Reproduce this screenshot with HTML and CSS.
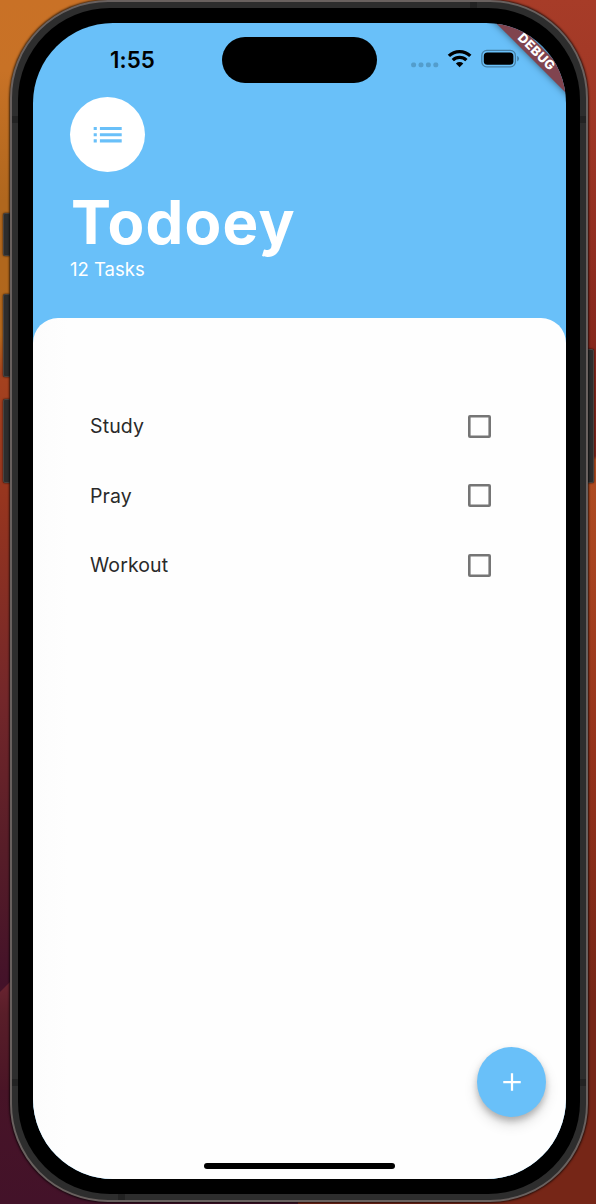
FILE: index.html
```html
<!DOCTYPE html>
<html lang="en">
<head>
<meta charset="utf-8">
<title>Todoey</title>
<link rel="stylesheet" href="styles.css">
</head>
<body>
<div class="desktop">
  <i class="wallpaper wallpaper-left"></i>
  <i class="wallpaper wallpaper-right"></i>
  <i class="wallpaper wallpaper-fold"></i>
  <i class="key key-action"></i>
  <i class="key key-up"></i>
  <i class="key key-down"></i>
  <i class="key key-power"></i>
  <div class="phone">
    <i class="band band-top"></i><i class="band band-bottom"></i>
    <i class="band band-left-top"></i><i class="band band-right-top"></i>
    <i class="band band-left-bottom"></i><i class="band band-right-bottom"></i>
    <div class="bezel">
      <main class="screen">
        <div class="status">
          <span class="time">1:55</span>
          <span class="island"></span>
          <svg class="indicators" width="110" height="20" viewBox="0 0 110 20">
            <g fill="#539dcc"><rect x="1.2" y="13.6" width="4.8" height="4.6" rx="1.6"/><rect x="8.6" y="13.6" width="4.8" height="4.6" rx="1.6"/><rect x="16" y="13.6" width="4.8" height="4.6" rx="1.6"/><rect x="23.4" y="13.6" width="4.8" height="4.6" rx="1.6"/></g>
            <g fill="none" stroke="#000" stroke-width="3.3"><path d="M38.9 6.9a15.3 15.3 0 0 1 21.4 0"/><path d="M42.8 11.1a9.8 9.8 0 0 1 13.6 0"/></g>
            <path d="M49.6 18.2l-3.7-3.8a5.4 5.4 0 0 1 7.4 0z"/>
            <rect x="71.8" y="1.4" width="33.6" height="16.4" rx="5" fill="none" stroke="#467fa5" stroke-width="1.3"/>
            <rect x="73.8" y="3.4" width="29.6" height="12.4" rx="3.6"/>
            <path d="M107.2 6.7q1.8.8 1.8 2.9t-1.8 2.9z" fill="#467fa5"/>
          </svg>
        </div>
        <header class="header">
          <div class="avatar">
            <svg width="37.4" height="37.4" viewBox="0 0 24 24" fill="#69c0f9"><path d="M3 13h2v-2H3v2zm0 4h2v-2H3v2zm0-8h2V7H3v2zm4 4h14v-2H7v2zm0 4h14v-2H7v2zM7 7v2h14V7H7z"/></svg>
          </div>
          <h1 class="title">Todoey</h1>
          <p class="count">12 Tasks</p>
        </header>
        <section class="sheet">
          <ul class="tasks">
            <li class="task"><span>Study</span><i class="check"></i></li>
            <li class="task"><span>Pray</span><i class="check"></i></li>
            <li class="task"><span>Workout</span><i class="check"></i></li>
          </ul>
        </section>
        <div class="ribbon">DEBUG</div>
        <button class="add" aria-label="Add task">
          <svg width="30" height="30" viewBox="0 0 24 24" fill="#fff"><path d="M19 12.9h-6.1V19h-1.8v-6.1H5v-1.8h6.1V5h1.8v6.1H19z"/></svg>
        </button>
        <i class="home"></i>
      </main>
    </div>
  </div>
</div>
</body>
</html>
```
FILE: styles.css
```css
* { box-sizing: border-box; }
body { margin: 0; font-family: Inter, "Liberation Sans", sans-serif; }
.desktop { position: relative; width: 596px; height: 1204px; padding: 0 8px 2px 10px; overflow: hidden; background: #652017; }
.wallpaper { position: absolute; top: 0; bottom: 0; }
.wallpaper-left { left: 0; width: 298px; background: linear-gradient(#c97126 0, #c87226 70px, #b0671e 200px, #b2671c 335px, #a5421f 375px, #96351f 500px, #73272a 700px, #571d28 850px, #431229 985px, #4a1526 1010px, #431229 1204px); }
.wallpaper-right { right: 0; width: 298px; background: linear-gradient(#a73c28 0, #a13826 100px, #8b2a1e 300px, #7c2319 456px, #b04d21 460px, #a84420 560px, #95321b 750px, #762617 1000px, #762617 1204px); }
.wallpaper-fold { left: 0; top: 980px; bottom: auto; width: 12px; height: 110px; background: linear-gradient(#6b2431, #591e29 30%, #4a1526); clip-path: polygon(0 12px, 12px 0, 12px 100%, 0 100%); }
.phone { position: relative; width: 578px; height: 1202px; padding: 6px; border: 2px solid #69615f; border-radius: 98px; background: #2d2d2d; box-shadow: 0 0 2px 1px rgba(0,0,0,.65); }
.bezel { height: 1186px; padding: 15px; border-radius: 92px; background: #000; }
.screen { position: relative; display: flex; flex-direction: column; width: 533px; height: 1156px; overflow: hidden; border-radius: 80px; background: #69c0f9; }

.key { position: absolute; width: 8px; background: #2d2d2d; border: 1px solid #494340; border-radius: 2px; box-shadow: 0 0 2px #100a08; }
.key-action { left: 3px; top: 213px; height: 43px; }
.key-up { left: 3px; top: 294px; height: 83px; }
.key-down { left: 3px; top: 399px; height: 84px; }
.key-power { left: 586px; top: 349px; height: 134px; }
.band { position: absolute; background: #222; }
.band-top, .band-bottom { width: 7px; height: 6px; }
.band-top { left: 458px; top: 0; }
.band-bottom { left: 106px; bottom: 0; }
.band-left-top, .band-right-top, .band-left-bottom, .band-right-bottom { width: 6px; height: 7px; }
.band-left-top { left: 0; top: 114px; }
.band-right-top { right: 0; top: 114px; }
.band-left-bottom { left: 0; top: 1077px; }
.band-right-bottom { right: 0; top: 1077px; }

.status { display: flex; height: 74px; padding: 14px 0 0 77px; }
.time { width: 112px; padding-top: 9px; font-size: 22.3px; line-height: 28px; font-weight: 600; letter-spacing: .05px; }
.island { width: 155px; height: 46px; border-radius: 23px; background: #000; }
.indicators { margin: 12px 0 0 33px; }

.header { height: 221px; padding-left: 37px; color: #fff; }
.avatar { display: flex; align-items: center; justify-content: center; width: 75px; height: 75px; border-radius: 50%; background: #fff; }
.title { margin: 14px 0 0 1px; font-size: 60px; line-height: 72px; font-weight: 700; letter-spacing: 1.2px; }
.count { margin: 0; font-size: 18.5px; line-height: 22px; letter-spacing: 0; }

.sheet { flex: 1; padding: 73.5px 75px 0 57px; border-radius: 25px 25px 0 0; background: linear-gradient(90deg, #fcfcfc, #fefefe 35px); }
.tasks { margin: 0; padding: 0; list-style: none; }
.task { display: flex; align-items: center; justify-content: space-between; height: 69.5px; color: #2a2a2a; font-size: 19.5px; letter-spacing: .12px; }
.check { width: 23px; height: 23px; border-radius: 2px; box-shadow: inset 0 0 0 2.6px #757575; }

.ribbon { position: absolute; left: 442.5px; top: 22px; width: 120px; height: 15px; transform: rotate(45deg); background: #80444f; color: #fff; font-size: 12.8px; line-height: 14px; font-weight: 800; text-align: center; letter-spacing: .4px; box-shadow: 0 0 7px rgba(0,0,0,.5); }
.add { position: absolute; right: 20px; bottom: 62px; display: flex; align-items: center; justify-content: center; width: 69px; height: 70px; padding: 0; border: 0; border-radius: 50%; background: #69c0f9; box-shadow: 0 4px 6px rgba(0,0,0,.22), 0 7px 14px rgba(0,0,0,.14); }
.home { position: absolute; left: 171px; bottom: 10px; width: 191px; height: 6px; border-radius: 3px; background: #000; }
```
